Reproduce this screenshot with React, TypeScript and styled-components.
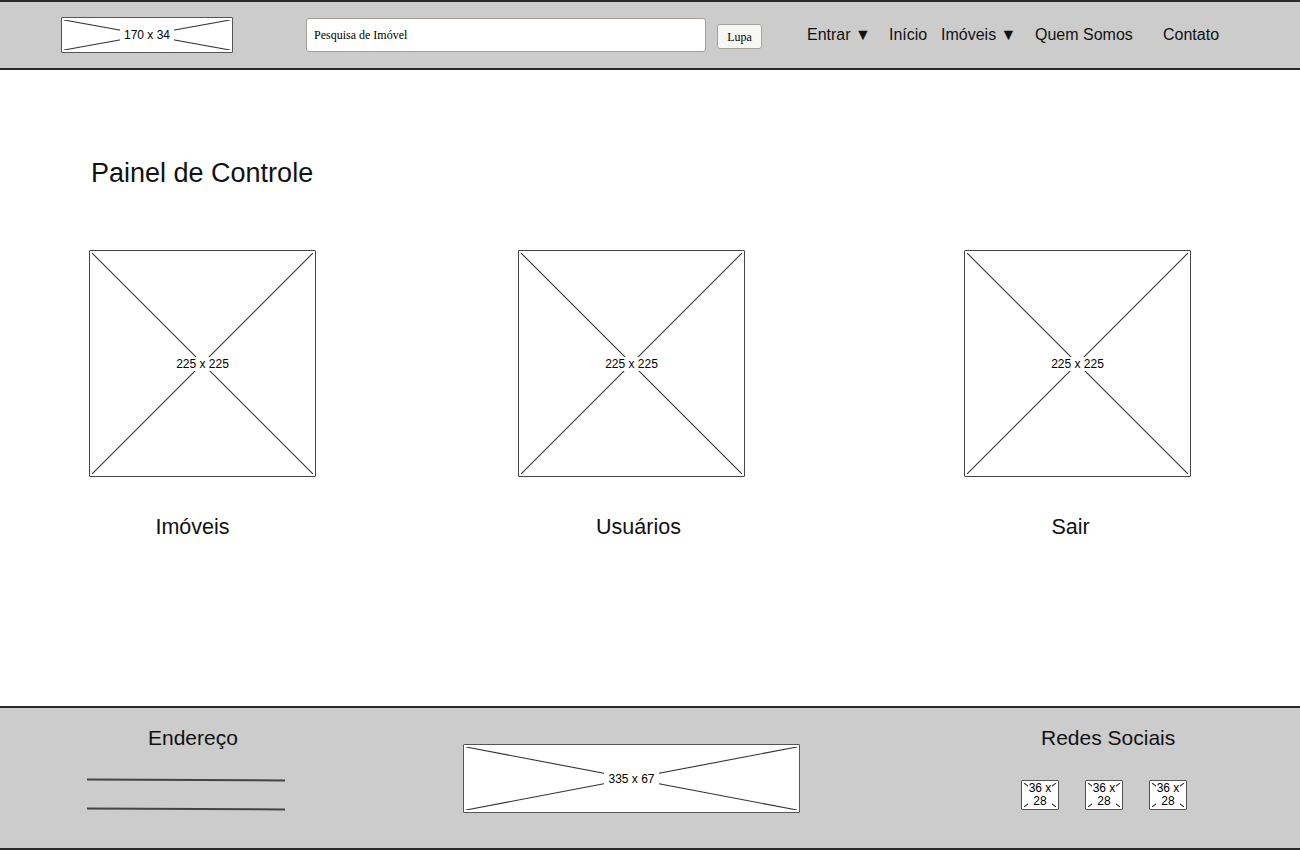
import React from "react";
import styled, { createGlobalStyle } from "styled-components";

const GlobalStyle = createGlobalStyle`
  html, body { margin: 0; padding: 0; background: #fff; }
  body { font-family: "Liberation Sans", Arial, sans-serif; color: #111; }
  * { box-sizing: border-box; }
`;

const Page = styled.div`
  width: 1300px;
  height: 850px;
  display: flex;
  flex-direction: column;
  overflow: hidden;
`;

const Header = styled.header`
  height: 70px;
  flex: none;
  background: #cccccc;
  border-top: 2px solid #2a2a2a;
  border-bottom: 2px solid #2a2a2a;
  display: flex;
  align-items: center;
  padding-left: 61px;
`;

const PlaceholderBox = styled.div<{ $w: number; $h: number; $border?: string }>`
  position: relative;
  width: ${(p) => p.$w}px;
  height: ${(p) => p.$h}px;
  flex: none;
  background: #fff;
  border: ${(p) => p.$border ?? "1px solid #444"};
  border-radius: 1px;
  display: flex;
  align-items: center;
  justify-content: center;
`;

const Cross = styled.svg`
  position: absolute;
  inset: 2px;
  width: calc(100% - 4px);
  height: calc(100% - 4px);
`;

const PlaceholderLabel = styled.span<{ $small?: boolean }>`
  position: relative;
  font-family: "Liberation Sans", Arial, sans-serif;
  font-size: 12px;
  line-height: ${(p) => (p.$small ? "13px" : "14px")};
  color: #000;
  background: #fff;
  padding: ${(p) => (p.$small ? "0" : "0 4px")};
  text-align: center;
  white-space: ${(p) => (p.$small ? "normal" : "nowrap")};
  width: ${(p) => (p.$small ? "24px" : "auto")};
`;

const Placeholder: React.FC<{
  w: number;
  h: number;
  label: string;
  small?: boolean;
  border?: string;
}> = ({ w, h, label, small, border }) => (
  <PlaceholderBox $w={w} $h={h} $border={border}>
    <Cross viewBox="0 0 100 100" preserveAspectRatio="none">
      <line x1="0" y1="0" x2="100" y2="100" stroke="#333" strokeWidth="1.1" vectorEffect="non-scaling-stroke" />
      <line x1="100" y1="0" x2="0" y2="100" stroke="#333" strokeWidth="1.1" vectorEffect="non-scaling-stroke" />
    </Cross>
    <PlaceholderLabel $small={small}>{label}</PlaceholderLabel>
  </PlaceholderBox>
);

const SearchInput = styled.input`
  margin-left: 73px;
  width: 400px;
  height: 34px;
  border: 1px solid #a59f95;
  border-radius: 3px;
  background: #fff;
  padding: 0 7px;
  font-family: "Liberation Serif", "Times New Roman", serif;
  font-size: 12px;
  color: #000;
  outline: none;
`;

const SearchButton = styled.button`
  margin-left: 11px;
  width: 45px;
  height: 25px;
  margin-top: 2px;
  border: 1px solid #a8a39b;
  border-radius: 3px;
  background: #f7f7f5;
  font-family: "Liberation Serif", "Times New Roman", serif;
  font-size: 12px;
  color: #000;
  padding: 2px 0 0;
`;

const Nav = styled.nav`
  margin-left: 45px;
  display: flex;
  align-items: center;
`;

const NavItem = styled.span<{ $w?: number }>`
  width: ${(p) => (p.$w ? `${p.$w}px` : "auto")};
  font-size: 16px;
  color: #111;
  white-space: nowrap;
`;

const Main = styled.main`
  flex: 1;
  padding: 88px 0 0 89px;
`;

const Title = styled.h1`
  margin: 0 0 62px 2px;
  font-size: 27px;
  font-weight: normal;
  line-height: 30px;
  color: #111;
`;

const Cards = styled.div`
  display: grid;
  grid-template-columns: 429px 446px 227px;
`;

const Card = styled.div`
  display: flex;
  flex-direction: column;
  width: 227px;
`;

const CardLabel = styled.div<{ $shift: number }>`
  margin-top: 38px;
  font-size: 21.5px;
  line-height: 25px;
  text-align: center;
  transform: translateX(${(p) => p.$shift}px);
  color: #111;
`;

const Footer = styled.footer`
  height: 144px;
  flex: none;
  background: #cccccc;
  border-top: 2px solid #2a2a2a;
  border-bottom: 2px solid #2a2a2a;
  display: flex;
  align-items: flex-start;
  padding: 18px 0 0 87px;
`;

const FooterCol = styled.div<{ $w?: number; $ml?: number }>`
  width: ${(p) => (p.$w ? `${p.$w}px` : "auto")};
  margin-left: ${(p) => p.$ml ?? 0}px;
  display: flex;
  flex-direction: column;
`;

const FooterHeading = styled.div<{ $pl: number }>`
  padding-left: ${(p) => p.$pl}px;
  font-size: 21px;
  line-height: 24px;
  color: #111;
`;

const AddressLine = styled.div<{ $mt: number }>`
  margin-top: ${(p) => p.$mt}px;
  width: 198px;
  height: 1.5px;
  background: #444;
  transform: rotate(0.3deg);
`;

const LogoSlot = styled.div`
  margin-left: 178px;
  margin-top: 18px;
`;

const Socials = styled.div`
  margin-top: 30px;
  display: flex;
  gap: 26px;
`;

const cards = [
  { label: "Imóveis", shift: -10 },
  { label: "Usuários", shift: 7 },
  { label: "Sair", shift: -7 },
];

export default function App() {
  return (
    <>
      <GlobalStyle />
      <Page>
        <Header>
          <Placeholder w={172} h={36} label="170 x 34" border="1.5px solid #555" />
          <SearchInput defaultValue="Pesquisa de Imóvel" />
          <SearchButton>Lupa</SearchButton>
          <Nav>
            <NavItem $w={82}>Entrar ▼</NavItem>
            <NavItem $w={52}>Início</NavItem>
            <NavItem $w={94}>Imóveis ▼</NavItem>
            <NavItem $w={128}>Quem Somos</NavItem>
            <NavItem>Contato</NavItem>
          </Nav>
        </Header>
        <Main>
          <Title>Painel de Controle</Title>
          <Cards>
            {cards.map((c) => (
              <Card key={c.label}>
                <Placeholder w={227} h={227} label="225 x 225" />
                <CardLabel $shift={c.shift}>{c.label}</CardLabel>
              </Card>
            ))}
          </Cards>
        </Main>
        <Footer>
          <FooterCol $w={198}>
            <FooterHeading $pl={61}>Endereço</FooterHeading>
            <AddressLine $mt={29} />
            <AddressLine $mt={27} />
          </FooterCol>
          <LogoSlot>
            <Placeholder w={337} h={69} label="335 x 67" border="1.5px solid #555" />
          </LogoSlot>
          <FooterCol $ml={221}>
            <FooterHeading $pl={20}>Redes Sociais</FooterHeading>
            <Socials>
              <Placeholder w={38} h={30} label="36 x 28" small border="1.5px solid #555" />
              <Placeholder w={38} h={30} label="36 x 28" small border="1.5px solid #555" />
              <Placeholder w={38} h={30} label="36 x 28" small border="1.5px solid #555" />
            </Socials>
          </FooterCol>
        </Footer>
      </Page>
    </>
  );
}
